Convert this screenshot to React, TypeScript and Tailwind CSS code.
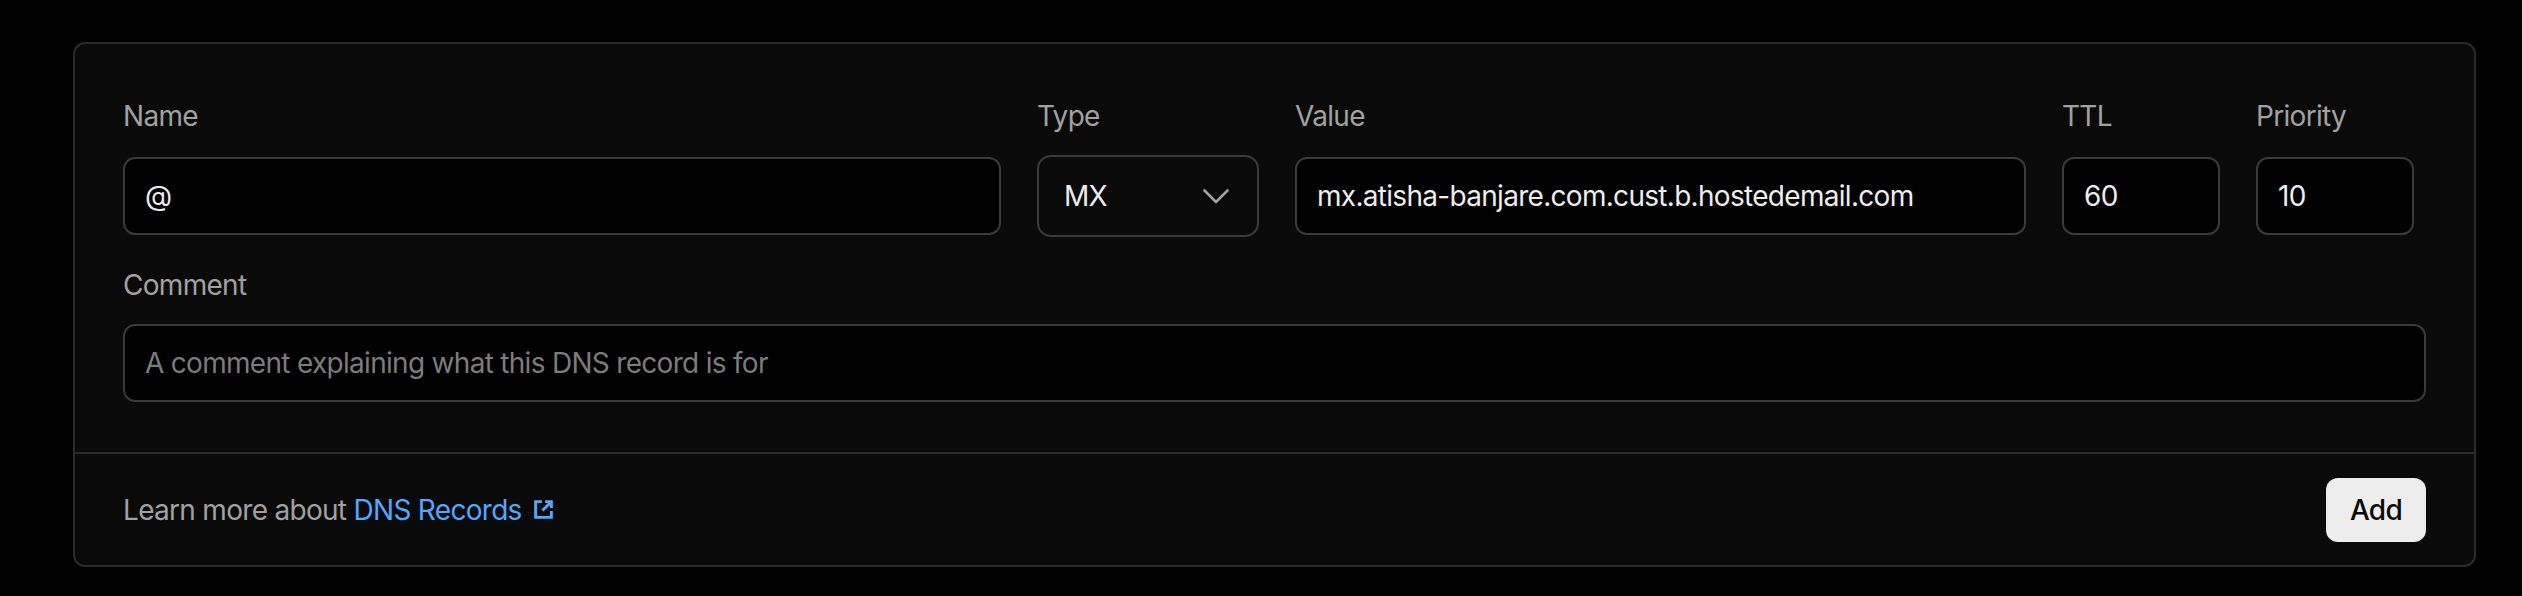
import React from 'react';

const font = { fontFamily: 'Inter, "Noto Sans", sans-serif' };

const Label: React.FC<{ children: React.ReactNode }> = ({ children }) => (
  <div className="h-[40px] mb-[19px] text-[28px] leading-[40px] text-[#a1a1a1]">{children}</div>
);

const TextBox: React.FC<{ value?: string; placeholder?: string }> = ({ value, placeholder }) => (
  <div className="h-[78px] w-full rounded-[12px] border-2 border-[#3a3a3a] bg-black pl-[20px] flex items-center text-[28px]">
    {value ? (
      <span className="text-[#ededed]">{value}</span>
    ) : (
      <span className="text-[#7c7c7c]">{placeholder}</span>
    )}
  </div>
);

const Chevron = () => (
  <svg width="26" height="15" viewBox="0 0 26 15" fill="none">
    <path d="M1.5 1.5 13 13 24.5 1.5" stroke="#a1a1a1" strokeWidth="2.6" strokeLinecap="round" strokeLinejoin="round" />
  </svg>
);

const ExternalIcon = () => (
  <svg width="21" height="21" viewBox="0 0 20 20" fill="none">
    <path d="M8.5 2.5H2.5v15h15v-6" stroke="#52a8ff" strokeWidth="2.8" strokeLinejoin="miter" />
    <path d="M11.5 2.5h6v6" stroke="#52a8ff" strokeWidth="2.8" />
    <path d="M17.2 2.8 9 11" stroke="#52a8ff" strokeWidth="2.8" />
  </svg>
);

export default function App() {
  return (
    <div className="min-h-[596px] bg-black pt-[42px] pb-[29px] tracking-[-0.7px]" style={font}>
      <div className="ml-[73px] w-[2403px] rounded-[12px] border-2 border-[#2b2b2b] bg-[#0a0a0a]">
        {/* Record fields */}
        <div className="px-[48px] pt-[52px] pb-[50px]">
          <div className="flex gap-[36px]">
            <div className="w-[878px]">
              <Label>Name</Label>
              <div className="h-[82px] flex items-center">
                <TextBox value="@" />
              </div>
            </div>
            <div className="w-[222px]">
              <Label>Type</Label>
              <div className="h-[82px] w-full rounded-[14px] border-2 border-[#3a3a3a] bg-[#0a0a0a] pl-[25px] pr-[28px] flex items-center justify-between text-[28px] text-[#ededed]">
                <span>MX</span>
                <Chevron />
              </div>
            </div>
            <div className="w-[731px]">
              <Label>Value</Label>
              <div className="h-[82px] flex items-center">
                <TextBox value="mx.atisha-banjare.com.cust.b.hostedemail.com" />
              </div>
            </div>
            <div className="w-[158px]">
              <Label>TTL</Label>
              <div className="h-[82px] flex items-center">
                <TextBox value="60" />
              </div>
            </div>
            <div className="w-[158px]">
              <Label>Priority</Label>
              <div className="h-[82px] flex items-center">
                <TextBox value="10" />
              </div>
            </div>
          </div>

          <div className="mt-[28px]">
            <Label>Comment</Label>
            <TextBox placeholder="A comment explaining what this DNS record is for" />
          </div>
        </div>

        {/* Footer */}
        <div className="h-[113px] border-t-2 border-[#2b2b2b] px-[48px] flex items-center justify-between">
          <div className="flex items-center text-[28px] text-[#a1a1a1]">
            <span>Learn more about&nbsp;</span>
            <span className="text-[#52a8ff]">DNS Records</span>
            <span className="ml-[11px] flex items-center">
              <ExternalIcon />
            </span>
          </div>
          <button className="h-[64px] w-[100px] rounded-[12px] bg-[#ededed] text-[28px] font-medium text-[#0a0a0a]">
            Add
          </button>
        </div>
      </div>
    </div>
  );
}
